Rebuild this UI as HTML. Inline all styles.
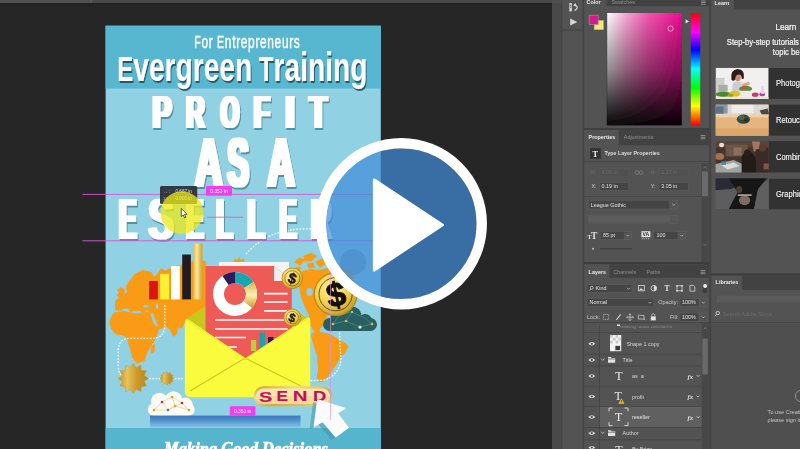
<!DOCTYPE html>
<html>
<head>
<meta charset="utf-8">
<title>Profit as a Reseller - Video</title>
<style>
html,body{margin:0;padding:0;background:#282828;overflow:hidden;}
body{width:800px;height:449px;position:relative;font-family:"Liberation Sans",sans-serif;}
svg{position:absolute;left:0;top:0;display:block;}
text{font-family:"Liberation Sans",sans-serif;}
.ser{font-family:"Liberation Serif",serif;}
</style>
</head>
<body>
<svg width="800" height="449" viewBox="0 0 800 449">
<defs>
  <linearGradient id="gold" x1="0" y1="0" x2="1" y2="0">
    <stop offset="0" stop-color="#d9a93a"/><stop offset="0.35" stop-color="#f8e48e"/><stop offset="0.7" stop-color="#d9ac3c"/><stop offset="1" stop-color="#b98a1e"/>
  </linearGradient>
  <linearGradient id="goldv" x1="0" y1="0" x2="0" y2="1">
    <stop offset="0" stop-color="#d9b24a"/><stop offset="0.5" stop-color="#fdf0b0"/><stop offset="1" stop-color="#c79a30"/>
  </linearGradient>
  <radialGradient id="coin" cx="0.4" cy="0.35" r="0.7">
    <stop offset="0" stop-color="#fdf0a0"/><stop offset="0.55" stop-color="#f3d24a"/><stop offset="1" stop-color="#c79a24"/>
  </radialGradient>
  <linearGradient id="sv" x1="0" y1="0" x2="0" y2="1">
    <stop offset="0" stop-color="#ffffff"/><stop offset="1" stop-color="#000000"/>
  </linearGradient>
  <linearGradient id="hue" x1="0" y1="0" x2="0" y2="1">
    <stop offset="0" stop-color="#ff0000"/><stop offset="0.17" stop-color="#ff00ff"/><stop offset="0.33" stop-color="#0000ff"/><stop offset="0.5" stop-color="#00ffff"/><stop offset="0.67" stop-color="#00ff00"/><stop offset="0.83" stop-color="#ffff00"/><stop offset="1" stop-color="#ff0000"/>
  </linearGradient>
  <clipPath id="posterclip"><rect x="105.6" y="25.7" width="275.2" height="440"/></clipPath>
  <filter id="fatP" filterUnits="userSpaceOnUse" x="100" y="80" width="300" height="180">
    <feMorphology in="SourceGraphic" operator="dilate" radius="2.0 0.4" result="fat"/>
    <feOffset in="fat" dx="1.3" dy="1.8" result="off"/>
    <feGaussianBlur in="off" stdDeviation="0.6" result="blur"/>
    <feFlood flood-color="#2f6678" flood-opacity="0.6"/>
    <feComposite in2="blur" operator="in" result="shadow"/>
    <feMerge><feMergeNode in="shadow"/><feMergeNode in="fat"/></feMerge>
  </filter>
  <filter id="fatA" filterUnits="userSpaceOnUse" x="100" y="80" width="300" height="180">
    <feMorphology in="SourceGraphic" operator="dilate" radius="2.4 0.5" result="fat"/>
    <feOffset in="fat" dx="1.3" dy="1.8" result="off"/>
    <feGaussianBlur in="off" stdDeviation="0.6" result="blur"/>
    <feFlood flood-color="#2f6678" flood-opacity="0.6"/>
    <feComposite in2="blur" operator="in" result="shadow"/>
    <feMerge><feMergeNode in="shadow"/><feMergeNode in="fat"/></feMerge>
  </filter>
  <filter id="fat2" filterUnits="userSpaceOnUse" x="100" y="40" width="300" height="60">
    <feOffset in="SourceGraphic" dx="1.3" dy="1.8" result="off"/>
    <feGaussianBlur in="off" stdDeviation="0.45" result="blur"/>
    <feFlood flood-color="#1a4352" flood-opacity="0.8"/>
    <feComposite in2="blur" operator="in" result="shadow"/>
    <feMerge><feMergeNode in="shadow"/><feMergeNode in="SourceGraphic"/></feMerge>
  </filter>
  <linearGradient id="base" x1="0" y1="0" x2="0" y2="1">
    <stop offset="0" stop-color="#3a74ba"/><stop offset="0.45" stop-color="#5596d0"/><stop offset="1" stop-color="#8cc2e4"/>
  </linearGradient>
  <linearGradient id="svw" x1="0" y1="0" x2="1" y2="0">
    <stop offset="0" stop-color="#ffffff"/><stop offset="0.25" stop-color="#f7a6d4"/><stop offset="0.55" stop-color="#f255b0"/><stop offset="1" stop-color="#ee0c94"/>
  </linearGradient>
  <linearGradient id="svb" x1="0" y1="0" x2="0" y2="1">
    <stop offset="0" stop-color="#000000" stop-opacity="0"/><stop offset="0.5" stop-color="#000000" stop-opacity="0.42"/><stop offset="0.8" stop-color="#000000" stop-opacity="0.76"/><stop offset="1" stop-color="#000000" stop-opacity="0.97"/>
  </linearGradient>
  <filter id="soft" x="-10%" y="-10%" width="120%" height="120%"><feGaussianBlur stdDeviation="0.7"/></filter>
  <linearGradient id="goldb" x1="0" y1="0" x2="1" y2="1">
    <stop offset="0" stop-color="#c9962a"/><stop offset="0.3" stop-color="#f4dc86"/><stop offset="0.6" stop-color="#d8a838"/><stop offset="1" stop-color="#f2d878"/>
  </linearGradient>
  <linearGradient id="goldstar" x1="0" y1="0" x2="1" y2="0">
    <stop offset="0" stop-color="#c08f24"/><stop offset="0.3" stop-color="#e6c25a"/><stop offset="0.6" stop-color="#cc9c2e"/><stop offset="1" stop-color="#b5841a"/>
  </linearGradient>
  <linearGradient id="goldbar" x1="0" y1="0" x2="1" y2="0">
    <stop offset="0" stop-color="#e2ba52"/><stop offset="0.4" stop-color="#fbea96"/><stop offset="0.75" stop-color="#e0b850"/><stop offset="1" stop-color="#cfa238"/>
  </linearGradient>

  <filter id="softall" filterUnits="userSpaceOnUse" x="-5" y="-5" width="810" height="459"><feGaussianBlur stdDeviation="0.45"/></filter>
</defs>

<g id="all" filter="url(#softall)">
<!-- canvas -->
<rect x="-10" y="-10" width="820" height="470" fill="#272727"/>
<!-- top tab bar -->
<rect x="-10" y="-6" width="563" height="9.3" fill="#484848"/>
<rect x="-10" y="-6" width="102" height="9.3" fill="#4f4f4f"/>
<rect x="90.4" y="-6" width="1.4" height="9" fill="#5c5c5c"/>
<rect x="-10" y="3.3" width="563" height="1" fill="#202020"/>

<!-- POSTER -->
<g id="poster" clip-path="url(#posterclip)">
  <rect x="104.6" y="24.7" width="277.2" height="440" fill="#1c1c1c"/>
  <rect x="105" y="25" width="277" height="440" fill="#90d2e4"/>
  <rect x="105" y="25" width="277" height="63.6" fill="#59b7d0"/>
  <rect x="105" y="428" width="277" height="36" fill="#54b5cc"/>
    <g id="illustration">
    <!-- dotted route lines -->
    <g fill="none" stroke="#ffffff" stroke-width="1.3" stroke-dasharray="1.7 1.5" opacity="0.95">
      <path d="M246 254 C 262 236, 282 228, 312 229"/>
      <path d="M146 378.7 L184 378.7"/>
    </g>
    <!-- world map (orange) -->
    <g fill="#fa9b18" stroke="#fa9b18" stroke-width="1.2" stroke-linejoin="round">
      <!-- europe + asia -->
      <path d="M115.5 306 L116 300.5 L120 298.5 L117.5 295 L120 293 L117.5 290 L121 288 L124 289.5 L124 295 L127.5 292.5 L126.5 286 L130 281 L135 274.5 L143 270.5 L151 272.5 L154 278 L158 274 L161 269 L166 271 L172 268 L181 265.5 L192 262 L205.5 261.5 L205.5 309 L184.5 322.5 L181 328 L178 327 L176 334 L173.5 336 L170 329 L166 325.5 L162 328 L158.5 328.5 L155 320 L151.5 312.5 L147 309.5 L143 312 L137 310 L131 311.5 L127 308 L121 310 L116 310 Z"/>
      <!-- africa -->
      <path d="M110 322 L112 316 L115 312.8 L124 311.5 L134 313.5 L142 313 L149.5 312 L152.5 323 L158.5 329.5 L155.5 338 L147 352 L144 360.5 L137 363 L133 358 L131 350 L129.5 345.5 L127 337.5 L122 334.5 L116.5 334 L111.5 328.5 Z"/>
      <path d="M152 347 L154.5 345 L154 351 L151.5 353 Z"/>
      <!-- north america -->
      <path d="M299.5 286 L299 277 L302.5 271.5 L311 269.5 L318 270.5 L325 269 L340 267 L352 271 L354 284 L348 298 L338 306 L331 310 L326 317 L322.5 325 L319 329.5 L314 328 L311 321.5 L309 314 L305 306 L301.5 297 Z"/>
      <path d="M295 262 L300 258 L304 260 L300 265 Z M304 256 L311 253.5 L316 256 L311 261 L305 261 Z M316 262 L322 259 L326 263 L320 267 Z M308 264 L313 263 L314 267.5 L309 268 Z M296 268 L300 267 L300 271 L296 271.5 Z"/>
      <!-- south america -->
      <path d="M311.6 334.5 L316 332 L323 333 L331 335 L338 339.5 L345 343.5 L348 347 L345 352 L340 357.5 L336 364 L332 370 L327 377 L322 381.5 L318 381 L317.5 376 L318.7 370 L318 362 L317.5 355 L315 348 L313 341 Z"/>
      <path d="M309 320 L312 321 L315 326 L319.5 331.5 L316 332.5 L312.5 328 Z"/>
    </g>
    <g fill="#90d2e4">
      <ellipse cx="126" cy="309.6" rx="3.2" ry="1"/>
      <ellipse cx="136.5" cy="312.2" rx="4.5" ry="1.1"/>
      <ellipse cx="146" cy="306.4" rx="3" ry="1.1"/>
      <ellipse cx="157" cy="306" rx="1.2" ry="3"/>
      <ellipse cx="309.5" cy="292" rx="3.2" ry="4"/>
      <path d="M151.5 314 L153 313 L158 326 L156.5 326.5 Z"/>
    </g>
    <path d="M339.6 332.5 L340 347 C341 358,342 362,338.3 369 C334 376,328 380,321 380.3 L310 380.6" fill="none" stroke="#ffffff" stroke-width="1.3" stroke-dasharray="1.7 1.5" opacity="0.95"/>
    <path d="M164.8 305 L164.8 324 C164.8 335,160 338.3,151 338.3 L132 338.3 C122 338.3,118.3 342,118.3 351 L118.3 366 C118.3 372,120 375,124 377" fill="none" stroke="#ffffff" stroke-width="1.3" stroke-dasharray="1.7 1.5" opacity="0.95"/>
    <!-- grey globe/medal behind circle -->
    <circle cx="353" cy="262" r="13" fill="#6f9bb0" opacity="0.8"/>
    <!-- dark teal cloud -->
    <g fill="#2b5f61">
      <rect x="323" y="318" width="54" height="13" rx="6.5"/>
      <circle cx="338" cy="319" r="8"/><circle cx="352" cy="316" r="9.5"/><circle cx="365" cy="321" r="7"/>
    </g>
    <g fill="#f5c93a"><circle cx="333" cy="324" r="1.3"/><circle cx="346" cy="321" r="1.3"/><circle cx="372" cy="324" r="1.3"/><circle cx="352" cy="312" r="1.2"/></g>
    <circle cx="360" cy="327" r="1.6" fill="#ffffff"/>
    <g stroke="#5fa39a" stroke-width="0.5" fill="none"><path d="M333 324 L346 321 L360 327 L372 324 M346 321 L352 312 L365 318 L372 324 M333 324 L340 314 L352 312"/></g>

    <!-- bar chart -->
    <rect x="149.1" y="281" width="8.8" height="18.4" fill="#d8150f"/>
    <rect x="160.1" y="273.8" width="9" height="25.6" fill="#fbf035"/>
    <rect x="171" y="266" width="8.8" height="33.4" fill="#ffffff"/>
    <rect x="182.2" y="254.5" width="8.7" height="44.9" fill="#231f20"/>
    <rect x="193.3" y="243.6" width="9.2" height="55.8" fill="url(#goldbar)"/>

    <!-- envelope back flap -->
    <path d="M184.5 320 L206 306 L206 340 Z" fill="#c8c81e"/>
    <path d="M310 320 L291 307 L291 340 Z" fill="#c8c81e"/>
    <!-- white page behind doc -->
    <rect x="219" y="262" width="70" height="40" fill="#f4f4f4"/>
    <path d="M233.4 262 l1.5 -4 l2 2.5 l2.2 -3.7 l2.2 3.7 l2 -2.5 l1.5 4 Z" fill="#d9a62a"/>
    <!-- red document -->
    <path d="M205.5 266 L274 266 L291.8 281 L291.8 365 L205.5 365 Z" fill="#ee5a57"/>
    <path d="M274 266 L274 281 L291.8 281 Z" fill="#f6ecea"/>
    <!-- donut -->
    <g transform="translate(235,294)">
      <circle r="16.5" fill="none" stroke="#ffffff" stroke-width="11"/>
      <path d="M-12.6 -18 A22 22 0 0 1 0 -22 L0 -11 A11 11 0 0 0 -6.3 -9 Z" fill="#2b1a5c"/>
      <path d="M0 -22 A22 22 0 0 1 18.5 -12 L9.2 -6 A11 11 0 0 0 0 -11 Z" fill="#17a7b3"/>
      <path d="M18.5 -12 A22 22 0 0 1 17 14 L8.5 7 A11 11 0 0 0 9.2 -6 Z" fill="url(#goldv)"/>
    </g>
    <!-- doc lines -->
    <g stroke="#ffffff" stroke-width="1.7">
      <path d="M264 293.6 H287.6 M264 302 H287.6 M264 310.8 H287.6 M215 320 H287.6 M215 329 H287.6 M215 337.5 H246 M215 347 H237"/>
    </g>
    <!-- mini bars -->
    <rect x="251" y="340" width="5.2" height="11" fill="#b9cf3a"/>
    <rect x="259.5" y="332.6" width="5.5" height="18.4" fill="#1d9fb0"/>
    <rect x="268" y="337" width="5.5" height="14" fill="#2b1a5c"/>
    <!-- envelope front -->
    <path d="M184.8 322 Q184.8 318 188.5 319.6 L245.5 358.2 L306.5 318 Q310.3 316.4 310.3 320 L310.3 391 Q310.3 397.2 304 397.2 L191 397.2 Q184.8 397.2 184.8 391 Z" fill="#fbfb3c"/>
    <path d="M190 391 L241 360.5 Q245.5 357 250 360.5 L306 388.5" fill="none" stroke="#c6c824" stroke-width="1.1"/>
    <path d="M187 320 L245.5 358.5 L308 318.5" fill="none" stroke="#e2e22a" stroke-width="0.8"/>

    <!-- coins -->
    <g font-weight="bold" text-anchor="middle" fill="#17100f">
      <circle cx="292.3" cy="278.3" r="10.3" fill="url(#coin)" stroke="#b88a1c" stroke-width="0.9"/>
      <circle cx="292.3" cy="278.3" r="7.6" fill="none" stroke="#2a2016" stroke-width="0.6" opacity="0.75"/>
      <text x="292.3" y="283.4" font-size="14.5" stroke="#17100f" stroke-width="0.4" transform="rotate(17 292.3 278.3)">$</text>
      <circle cx="292.3" cy="317.6" r="8.5" fill="url(#coin)" stroke="#b88a1c" stroke-width="0.9"/>
      <circle cx="292.3" cy="317.6" r="6.2" fill="none" stroke="#2a2016" stroke-width="0.5" opacity="0.75"/>
      <text x="292.3" y="321.9" font-size="12" stroke="#17100f" stroke-width="0.3" transform="rotate(17 292.3 317.6)">$</text>
      <circle cx="335.6" cy="294.2" r="21.3" fill="url(#coin)" stroke="#b88a1c" stroke-width="1.2"/>
      <circle cx="335.6" cy="294.2" r="16.6" fill="none" stroke="#2a2016" stroke-width="0.9" opacity="0.8"/>
      <text x="336" y="306.4" font-size="34" stroke="#17100f" stroke-width="1" transform="rotate(-12 335.6 294.2)">$</text>
    </g>

    <!-- starbursts -->
    <g fill="url(#goldstar)" stroke="#c9982c" stroke-width="0.5" stroke-linejoin="round">
      <path d="M133.3 363.2 L136.2 367.5 L140.9 365.2 L141.3 370.4 L146.5 370.8 L144.2 375.5 L148.5 378.4 L144.2 381.3 L146.5 386.0 L141.3 386.4 L140.9 391.6 L136.2 389.3 L133.3 393.6 L130.4 389.3 L125.7 391.6 L125.3 386.4 L120.1 386.0 L122.4 381.3 L118.1 378.4 L122.4 375.5 L120.1 370.8 L125.3 370.4 L125.7 365.2 L130.4 367.5 Z"/>
      <path d="M166.9 371.5 L168.2 373.4 L170.3 372.4 L170.6 374.7 L172.9 374.9 L171.9 377.1 L173.8 378.4 L171.9 379.7 L172.9 381.8 L170.6 382.1 L170.3 384.4 L168.2 383.4 L166.9 385.3 L165.6 383.4 L163.5 384.4 L163.2 382.1 L160.9 381.8 L161.9 379.7 L160.0 378.4 L161.9 377.1 L160.9 374.9 L163.2 374.7 L163.4 372.4 L165.6 373.4 Z"/>
    </g>

    <!-- white cloud with network -->
    <g fill="#fdfbf4">
      <rect x="147.8" y="403.4" width="46.9" height="12.4" rx="6.2"/>
      <circle cx="159.6" cy="401.4" r="8.6"/><circle cx="173.6" cy="399.8" r="8.6"/><circle cx="185.4" cy="405" r="7.4"/>
    </g>
    <g stroke="#d9b86a" stroke-width="0.5" fill="none"><path d="M154 410 L162 402 L172 397 L182 403 L189 410 M162 402 L168 410 L182 403 M172 397 L175 406 L168 410 M154 410 L168 410 M175 406 L189 410"/></g>
    <g><circle cx="154" cy="410" r="1.3" fill="#e8a020"/><circle cx="162" cy="402" r="1.3" fill="#c0392b"/><circle cx="172" cy="397" r="1.3" fill="#e8a020"/><circle cx="182" cy="403" r="1.3" fill="#c0392b"/><circle cx="189" cy="410" r="1.3" fill="#e8a020"/><circle cx="168" cy="410" r="1.3" fill="#2a8fa0"/><circle cx="175" cy="406" r="1.3" fill="#e8a020"/></g>

    <!-- monitor base -->
    <rect x="150" y="415.6" width="150.5" height="12" fill="url(#base)"/>

    <!-- SEND button -->
    <rect x="253.6" y="386.2" width="78.8" height="20" rx="10" fill="url(#goldb)"/>
    <rect x="256" y="388.6" width="74" height="15.2" rx="7.6" fill="#f8e6ae"/>
    <rect x="256" y="396" width="74" height="7.8" rx="3.9" fill="#f0d48a" opacity="0.6"/>
    <g font-weight="bold" fill="#c8105e" stroke="#c8105e" stroke-width="1.1" stroke-linejoin="round"><text transform="matrix(0.2003 0 0 0.1540 259.07 401.80)" font-size="100">S</text>
      <text transform="matrix(0.1729 0 0 0.1439 276.59 401.45)" font-size="100">E</text>
      <text transform="matrix(0.2041 0 0 0.1439 292.78 401.45)" font-size="100">N</text>
      <text transform="matrix(0.1843 0 0 0.1439 312.92 401.45)" font-size="100">D</text></g>

    <!-- cursor arrow -->
    <g stroke-linejoin="round">
      <path d="M317.8 400 L344.7 408.3 L337.1 413.1 L348.1 427.6 L335.7 436.6 L322.6 421.4 L314.3 426.2 Z" fill="#3f93aa" stroke="#3f93aa" stroke-width="1" opacity="0.55" transform="translate(-4.2,2.6)"/>
      <path d="M317.8 400 L344.7 408.3 L337.1 413.1 L348.1 427.6 L335.7 436.6 L322.6 421.4 L314.3 426.2 Z" fill="#fbfbfb" stroke="#fbfbfb" stroke-width="1.4"/>
    </g>
  </g>

    <g id="postertext" font-weight="bold" fill="#ffffff">
    <text transform="translate(194.3,48.1) scale(0.62,1)" font-size="17.2" font-weight="normal" stroke="#fff" stroke-width="0.5" textLength="170.2" lengthAdjust="spacing">F<tspan font-size="19.2">or</tspan> E<tspan font-size="19.2">ntrepreneurs</tspan></text>
    <g filter="url(#fat2)"><text transform="translate(117.2,80.9) scale(0.678,1)" font-size="35.6">E<tspan font-size="41.5">vergreen</tspan> T<tspan font-size="41.5">raining</tspan></text></g>
    <g filter="url(#fatP)">
      <text transform="matrix(0.2863 0 0 0.4637 152.39 128.10)" font-size="100">P</text>
      <text transform="matrix(0.2552 0 0 0.4637 186.29 128.10)" font-size="100">R</text>
      <text transform="matrix(0.2360 0 0 0.4647 220.63 128.15)" font-size="100">O</text>
      <text transform="matrix(0.2641 0 0 0.4637 253.83 128.10)" font-size="100">F</text>
      <text transform="matrix(0.3610 0 0 0.4637 284.99 128.10)" font-size="100">I</text>
      <text transform="matrix(0.2853 0 0 0.4637 309.48 128.10)" font-size="100">T</text>
    </g>
    <g filter="url(#fatA)">
      <text transform="matrix(0.3756 0 0 0.6832 195.21 186.30)" font-size="100">A</text>
      <text transform="matrix(0.3205 0 0 0.6780 227.48 186.14)" font-size="100">S</text>
      <text transform="matrix(0.3756 0 0 0.6832 267.46 186.30)" font-size="100">A</text>
    </g>
    <g filter="url(#fatP)">
      <text transform="matrix(0.2914 0 0 0.5785 80.05 238.70)" font-size="100">R</text>
      <text transform="matrix(0.2629 0 0 0.5785 118.99 238.70)" font-size="100">E</text>
      <text transform="matrix(0.3756 0 0 0.5763 148.42 238.64)" font-size="100">S</text>
      <text transform="matrix(0.2585 0 0 0.5785 186.27 238.70)" font-size="100">E</text>
      <text transform="matrix(0.2679 0 0 0.5785 216.21 238.70)" font-size="100">L</text>
      <text transform="matrix(0.2825 0 0 0.5785 247.61 238.70)" font-size="100">L</text>
      <text transform="matrix(0.2495 0 0 0.5785 279.83 238.70)" font-size="100">E</text>
      <text transform="matrix(0.2836 0 0 0.5785 311.10 238.70)" font-size="100">R</text>
    </g>
    <text class="ser" x="164" y="455" font-size="18" font-style="italic" font-weight="bold" stroke="#fff" stroke-width="0.7" textLength="164" lengthAdjust="spacingAndGlyphs">Making Good Decisions</text>
  </g>

</g>

<g id="guides">
  <!-- magenta smart guides -->
  <g stroke="#d65ad6" stroke-width="0.9" fill="none">
    <path d="M82.5 194.4 H380"/>
    <path d="M82.5 240.8 H380"/>
    <path d="M207 217.2 H243"/>
  </g>
  <path d="M330.5 272 V420" stroke="#d890e0" stroke-width="0.8" fill="none" opacity="0.8"/>
  <!-- measurement tooltip -->
  <rect x="160" y="186" width="37.2" height="18" rx="1.5" fill="#282c36" opacity="0.92"/>
  <g font-size="4.6" fill="#e4e4dc">
    <text x="163" y="192.8">↔ :</text><text x="175.5" y="192.8">0.667 in</text>
    <text x="163" y="200">↕ :</text><text x="175.5" y="200">0.000 in</text>
  </g>
  <!-- yellow cursor highlight -->
  <circle cx="181.8" cy="212.6" r="21.3" fill="#ece818" opacity="0.76"/>
  <rect x="206" y="186" width="26" height="9.8" rx="1" fill="#f23ef0"/>
  <text x="219" y="192.9" font-size="4.9" fill="#ffffff" text-anchor="middle">0.353 in</text>
  <rect x="229.8" y="406.2" width="25.6" height="9.6" rx="1" fill="#f23ef0"/>
  <text x="242.6" y="413" font-size="4.9" fill="#ffffff" text-anchor="middle">0.353 in</text>
  <!-- mouse pointer -->
  <path d="M181.3 208.4 L181.3 216.6 L183.2 214.9 L184.7 218 L185.9 217.4 L184.5 214.4 L187 214.3 Z" fill="#ffffff" stroke="#222222" stroke-width="0.7" stroke-linejoin="round"/>
</g>

<g id="play">
  <circle cx="401.2" cy="223.8" r="75.4" fill="#418bd8" fill-opacity="0.71"/>
  <circle cx="401.2" cy="223.8" r="80.5" fill="none" stroke="#ffffff" stroke-width="10.5"/>
  <path d="M374.1 179.6 L442.8 225 L374.1 270.4 Z" fill="#ffffff" stroke="#ffffff" stroke-width="2.4" stroke-linejoin="round"/>
</g>

<g id="panels" font-size="5.4">
  <!-- right dock background -->
  <rect x="552" y="-6" width="260" height="466" fill="#484848"/>
  <rect x="552" y="-6" width="260" height="9.4" fill="#4f4f4f"/>
  <!-- icon strip -->
  <rect x="562" y="-6" width="21" height="466" fill="#535353"/>
  <rect x="561.4" y="-6" width="0.8" height="466" fill="#434343"/>
  <rect x="582.6" y="-6" width="1.6" height="466" fill="#434343"/>
  <rect x="562" y="29.6" width="21" height="0.9" fill="#3e3e3e"/>
  <rect x="709.2" y="-6" width="2" height="466" fill="#434343"/>
  <!-- history icon -->
  <g fill="#d6d6d6" stroke="none">
    <rect x="569.3" y="3" width="2.6" height="8.4" rx="0.6"/>
    <rect x="569.9" y="4.8" width="1.4" height="1" fill="#535353"/>
    <rect x="569.9" y="6.6" width="1.4" height="1" fill="#535353"/>
    <path d="M574.2 5.4 C577.8 4.8,578.4 8.6,574.6 10.6" fill="none" stroke="#d6d6d6" stroke-width="1.1"/>
    <path d="M573 5.6 L575.8 3 L576.2 6.6 Z"/>
    <path d="M570.2 18.6 L577.4 22 L570.2 25.5 Z"/>
  </g>

  <!-- COLOR PANEL -->
  <rect x="584.2" y="-6" width="125" height="134.4" fill="#535353"/>
  <rect x="606.6" y="-6" width="102.6" height="12.2" fill="#434343"/>
  <text x="586.6" y="4.3" font-weight="bold" fill="#e6e6e6">Color</text>
  <text x="611.5" y="4.3" fill="#8e8e8e">Swatches</text>
  <g fill="#9a9a9a"><rect x="701" y="0.6" width="4.6" height="0.8"/><rect x="701" y="2.2" width="4.6" height="0.8"/><rect x="701" y="3.8" width="4.6" height="0.8"/></g>
  <!-- swatches -->
  <rect x="594.2" y="20.6" width="9.2" height="9" fill="#f6e970" stroke="#c9c28a" stroke-width="0.5"/>
  <rect x="589.2" y="15.2" width="9" height="9.2" fill="#dc1490" stroke="#9e8e98" stroke-width="0.7"/>
  <!-- colour field -->
  <rect x="607.2" y="13" width="74.2" height="112" fill="url(#svw)"/>
  <rect x="606.8" y="13" width="75" height="112.4" fill="url(#svb)"/>
  <circle cx="670.6" cy="28.6" r="2.6" fill="none" stroke="#f0d0e6" stroke-width="0.7"/>
  <!-- hue slider -->
  <rect x="690.8" y="13" width="9.4" height="112" fill="url(#hue)"/>
  <path d="M685.6 19.2 L689 21.4 L685.6 23.6 Z" fill="#e8e8e8"/>

  <!-- PROPERTIES PANEL -->
  <rect x="584.2" y="128.4" width="125" height="1.4" fill="#3a3a3a"/>
  <rect x="584.2" y="129.8" width="125" height="132.4" fill="#535353"/>
  <rect x="618.8" y="129.8" width="90.4" height="15.4" fill="#434343"/>
  <text x="588.6" y="138.9" font-weight="bold" fill="#ececec">Properties</text>
  <text x="623.8" y="138.9" fill="#8e8e8e">Adjustments</text>
  <g fill="#9a9a9a"><rect x="700.6" y="135.2" width="4.8" height="0.8"/><rect x="700.6" y="136.8" width="4.8" height="0.8"/><rect x="700.6" y="138.4" width="4.8" height="0.8"/></g>
  <rect x="590" y="148.2" width="10.8" height="10.6" fill="#333333"/>
  <text class="ser" x="595.4" y="156.6" font-size="8.4" font-weight="bold" fill="#f2f2f2" text-anchor="middle">T</text>
  <text x="604.5" y="155.4" font-weight="bold" fill="#dedede" font-size="5.3">Type Layer Properties</text>
  <rect x="584.2" y="161.2" width="125" height="0.8" fill="#434343"/>
  <!-- W/H row (dimmed) -->
  <text x="590.6" y="174.4" fill="#6f6f6f">W:</text>
  <rect x="599.4" y="168.6" width="29.4" height="7.8" fill="#515151" stroke="#5a5a5a" stroke-width="0.5"/>
  <text x="601.6" y="174.4" fill="#6a6a6a">4.06 in</text>
  <g fill="none" stroke="#7a7a7a" stroke-width="0.9"><circle cx="637" cy="172.5" r="1.8"/><circle cx="641" cy="172.5" r="1.8"/></g>
  <text x="650.6" y="174.4" fill="#6f6f6f">H:</text>
  <rect x="659" y="168.6" width="29.2" height="7.8" fill="#515151" stroke="#5a5a5a" stroke-width="0.5"/>
  <text x="661.2" y="174.4" fill="#6a6a6a">1.27 in</text>
  <!-- X/Y row -->
  <text x="591.4" y="188.2" fill="#cfcfcf">X:</text>
  <rect x="599.4" y="182.4" width="29.4" height="7.8" fill="#444444" stroke="#626262" stroke-width="0.5"/>
  <text x="601.6" y="188.2" fill="#e2e2e2">0.19 in</text>
  <text x="650.8" y="188.2" fill="#cfcfcf">Y:</text>
  <rect x="659" y="182.4" width="29.2" height="7.8" fill="#444444" stroke="#626262" stroke-width="0.5"/>
  <text x="661.2" y="188.2" fill="#e2e2e2">3.05 in</text>
  <rect x="584.2" y="196" width="117" height="0.7" fill="#434343"/>
  <!-- scrollbar -->
  <rect x="701.6" y="163" width="7" height="99" fill="#474747"/>
  <path d="M703.6 168.2 L705.2 166.6 L706.8 168.2" fill="none" stroke="#8a8a8a" stroke-width="0.7"/>
  <rect x="702" y="171.2" width="6" height="25" rx="1" fill="#6b6b6b"/>
  <path d="M703.6 244 L705.2 245.6 L706.8 244" fill="none" stroke="#8a8a8a" stroke-width="0.7"/>
  <!-- font dropdown -->
  <rect x="588.6" y="200.2" width="89" height="8.8" fill="#454545" stroke="#626262" stroke-width="0.5"/>
  <rect x="669.8" y="200.2" width="7.8" height="8.8" fill="#535353" stroke="#626262" stroke-width="0.5"/>
  <text x="590.8" y="206.5" fill="#e2e2e2">League Gothic</text>
  <path d="M672.2 203.8 L673.8 205.4 L675.4 203.8" fill="none" stroke="#bdbdbd" stroke-width="0.8"/>
  <rect x="588.6" y="215.6" width="89" height="7.6" fill="#5b5b5b" stroke="#606060" stroke-width="0.5"/>
  <rect x="669.8" y="215.6" width="7.8" height="7.6" fill="#585858" stroke="#606060" stroke-width="0.5"/>
  <!-- size row -->
  <text class="ser" x="587.6" y="238.8" font-size="6" font-weight="bold" fill="#e0e0e0">T</text>
  <text class="ser" x="591" y="238.8" font-size="9.4" font-weight="bold" fill="#e0e0e0">T</text>
  <rect x="600.8" y="231.2" width="30.6" height="8.4" fill="#454545" stroke="#626262" stroke-width="0.5"/>
  <rect x="624.2" y="231.2" width="7.2" height="8.4" fill="#535353" stroke="#626262" stroke-width="0.5"/>
  <text x="603" y="237.4" fill="#e2e2e2">85 pt</text>
  <path d="M626.4 234.8 L627.9 236.3 L629.4 234.8" fill="none" stroke="#bdbdbd" stroke-width="0.8"/>
  <rect x="641.4" y="231.2" width="9" height="6" fill="#e0e0e0"/>
  <text x="645.9" y="236.2" font-size="5.2" font-weight="bold" fill="#3a3a3a" text-anchor="middle">VA</text>
  <path d="M641.6 238.8 H650.2" stroke="#d0d0d0" stroke-width="0.8" stroke-dasharray="1.2 0.9"/>
  <rect x="653.8" y="231.2" width="31.4" height="8.4" fill="#454545" stroke="#626262" stroke-width="0.5"/>
  <rect x="678" y="231.2" width="7.2" height="8.4" fill="#535353" stroke="#626262" stroke-width="0.5"/>
  <text x="656.4" y="237.4" fill="#e2e2e2">100</text>
  <path d="M680.2 234.8 L681.7 236.3 L683.2 234.8" fill="none" stroke="#bdbdbd" stroke-width="0.8"/>
  <circle cx="593" cy="248.8" r="1" fill="#bdbdbd"/>
  <rect x="600" y="248.2" width="32" height="1.3" fill="#3c3c3c"/>

  <!-- LAYERS PANEL -->
  <rect x="584.2" y="262.2" width="125" height="2" fill="#3a3a3a"/>
  <rect x="584.2" y="264.2" width="125" height="195.8" fill="#535353"/>
  <rect x="609.4" y="264.2" width="99.8" height="13.6" fill="#434343"/>
  <text x="588.6" y="273.8" font-weight="bold" fill="#ececec">Layers</text>
  <text x="613.4" y="273.8" fill="#8e8e8e">Channels</text>
  <text x="646.4" y="273.8" fill="#8e8e8e">Paths</text>
  <g fill="#9a9a9a"><rect x="700.6" y="270.2" width="4.8" height="0.8"/><rect x="700.6" y="271.8" width="4.8" height="0.8"/><rect x="700.6" y="273.4" width="4.8" height="0.8"/></g>
  <!-- filter row -->
  <rect x="587" y="284.4" width="45" height="8.2" fill="#454545" stroke="#626262" stroke-width="0.5"/>
  <circle cx="591.8" cy="287.8" r="1.5" fill="none" stroke="#d8d8d8" stroke-width="0.7"/><path d="M590.8 289 L589.4 290.6" stroke="#d8d8d8" stroke-width="0.8"/>
  <text x="595.6" y="290.4" fill="#e2e2e2">Kind</text>
  <path d="M627 287.8 L628.5 289.3 L630 287.8" fill="none" stroke="#bdbdbd" stroke-width="0.8"/>
  <g fill="none" stroke="#dadada" stroke-width="0.8">
    <rect x="638.6" y="285.6" width="5.8" height="5.2"/>
    <circle cx="653.8" cy="288.2" r="2.8"/>
    <rect x="677" y="285.8" width="5" height="5"/>
    <path d="M690 285.4 H693.4 L694.8 286.8 V291.2 H690 Z"/>
  </g>
  <path d="M639.4 290 L641 288 L642.2 289.2 L643.6 290 Z" fill="#dadada"/>
  <path d="M653.8 285.4 A2.8 2.8 0 0 1 653.8 291 Z" fill="#dadada"/>
  <text class="ser" x="667" y="291.2" font-size="7.6" font-weight="bold" fill="#e6e6e6" text-anchor="middle">T</text>
  <g fill="#dadada"><rect x="676.2" y="285" width="1.6" height="1.6"/><rect x="681.2" y="285" width="1.6" height="1.6"/><rect x="676.2" y="290" width="1.6" height="1.6"/><rect x="681.2" y="290" width="1.6" height="1.6"/></g>
  <rect x="702.8" y="284" width="4.6" height="9.4" rx="2.3" fill="#3c3c3c"/>
  <circle cx="705.1" cy="286" r="2" fill="#f0f0f0"/>
  <!-- blend row -->
  <rect x="587" y="298.4" width="66.8" height="8.2" fill="#454545" stroke="#626262" stroke-width="0.5"/>
  <text x="589.6" y="304.4" fill="#e2e2e2">Normal</text>
  <path d="M648.4 301.8 L649.9 303.3 L651.4 301.8" fill="none" stroke="#bdbdbd" stroke-width="0.8"/>
  <text x="658.2" y="304.4" fill="#c8c8c8">Opacity:</text>
  <rect x="680" y="298.4" width="19" height="8.2" fill="#454545" stroke="#626262" stroke-width="0.5"/>
  <text x="682" y="304.4" fill="#e6e6e6">100%</text>
  <rect x="699.6" y="298.4" width="7.4" height="8.2" fill="#535353" stroke="#626262" stroke-width="0.5"/>
  <path d="M701.8 301.8 L703.3 303.3 L704.8 301.8" fill="none" stroke="#bdbdbd" stroke-width="0.8"/>
  <!-- lock row -->
  <text x="587" y="319" fill="#c8c8c8">Lock:</text>
  <g fill="none" stroke="#d4d4d4" stroke-width="0.7">
    <rect x="603.6" y="314.4" width="5" height="5" stroke-dasharray="1 0.8"/>
    <path d="M616.4 320 L620.6 314.4" stroke-width="1.1"/>
    <path d="M630 313.8 V320.6 M626.6 317.2 H633.4 M628.8 315 L630 313.8 L631.2 315 M628.8 319.4 L630 320.6 L631.2 319.4 M627.8 316 L626.6 317.2 L627.8 318.4 M632.2 316 L633.4 317.2 L632.2 318.4"/>
    <path d="M639.4 315.4 H644 V320 M638.4 314.4 V319 H645"/>
    <path d="M651.8 316.6 V315.2 A1.5 1.5 0 0 1 654.8 315.2 V316.6"/>
  </g>
  <rect x="650.8" y="316.4" width="5" height="4" fill="#e4e4e4"/>
  <text x="670" y="319" fill="#c8c8c8">Fill:</text>
  <rect x="680" y="313" width="19" height="8.2" fill="#454545" stroke="#626262" stroke-width="0.5"/>
  <text x="682" y="319" fill="#e6e6e6">100%</text>
  <rect x="699.6" y="313" width="7.4" height="8.2" fill="#535353" stroke="#626262" stroke-width="0.5"/>
  <path d="M701.8 316.4 L703.3 317.9 L704.8 316.4" fill="none" stroke="#bdbdbd" stroke-width="0.8"/>
  <rect x="584.2" y="322.4" width="125" height="0.8" fill="#3c3c3c"/>
  <!-- layer rows -->
  <rect x="584.2" y="323.2" width="117.6" height="136.8" fill="#535353"/>
  <rect x="599.4" y="406.5" width="102.4" height="20.5" fill="#606060"/>
  <g fill="#424242">
    <rect x="584.2" y="332.2" width="117.6" height="0.7"/>
    <rect x="584.2" y="353.8" width="117.6" height="0.7"/>
    <rect x="584.2" y="365.6" width="117.6" height="0.7"/>
    <rect x="584.2" y="385.8" width="117.6" height="0.7"/>
    <rect x="584.2" y="406.3" width="117.6" height="0.7"/>
    <rect x="584.2" y="427" width="117.6" height="0.7"/>
    <rect x="584.2" y="439.5" width="117.6" height="0.7"/>
    <rect x="599.2" y="323.2" width="0.7" height="136.8"/>
  </g>
  <text x="620" y="327.6" fill="#8a8a8a" font-size="5" textLength="52" lengthAdjust="spacingAndGlyphs">Making Good Decisions</text>
  <rect x="584.2" y="323.2" width="117.6" height="2.6" fill="#535353"/>
  <rect x="617" y="324.4" width="3" height="1.6" fill="#dcdcdc"/>
  <!-- eyes -->
  <g id="eyes" fill="#e8e8e8">
    <g transform="translate(591.8,343.8)"><path d="M-3.4 0 Q0 -3.4 3.4 0 Q0 3.4 -3.4 0 Z"/><circle r="1.15" fill="#535353"/></g>
    <g transform="translate(591.8,360)"><path d="M-3.4 0 Q0 -3.4 3.4 0 Q0 3.4 -3.4 0 Z"/><circle r="1.15" fill="#535353"/></g>
    <g transform="translate(591.8,376)"><path d="M-3.4 0 Q0 -3.4 3.4 0 Q0 3.4 -3.4 0 Z"/><circle r="1.15" fill="#535353"/></g>
    <g transform="translate(591.8,396.5)"><path d="M-3.4 0 Q0 -3.4 3.4 0 Q0 3.4 -3.4 0 Z"/><circle r="1.15" fill="#535353"/></g>
    <g transform="translate(591.8,417)"><path d="M-3.4 0 Q0 -3.4 3.4 0 Q0 3.4 -3.4 0 Z"/><circle r="1.15" fill="#535353"/></g>
    <g transform="translate(591.8,433.2)"><path d="M-3.4 0 Q0 -3.4 3.4 0 Q0 3.4 -3.4 0 Z"/><circle r="1.15" fill="#535353"/></g>
    <g transform="translate(591.8,447.6)"><path d="M-3.4 0 Q0 -3.4 3.4 0 Q0 3.4 -3.4 0 Z"/><circle r="1.15" fill="#535353"/></g>
  </g>
  <!-- shape 1 copy -->
  <rect x="610" y="335" width="11.2" height="16.2" fill="#f4f4f4"/>
  <g fill="#c9c9c9"><rect x="610" y="335" width="2.8" height="2.8"/><rect x="615.6" y="335" width="2.8" height="2.8"/><rect x="612.8" y="337.8" width="2.8" height="2.8"/><rect x="618.4" y="337.8" width="2.8" height="2.8"/><rect x="610" y="340.6" width="2.8" height="2.8"/><rect x="615.6" y="340.6" width="2.8" height="2.8"/></g>
  <rect x="615" y="345.6" width="5.4" height="5" fill="#3a3a3a" stroke="#f0f0f0" stroke-width="0.7"/>
  <text x="626.4" y="345.8" fill="#d6d6d6">Shape 1 copy</text>
  <!-- Title group -->
  <path d="M601.2 358.6 L602.8 360.4 L604.4 358.6" fill="none" stroke="#c8c8c8" stroke-width="0.8"/>
  <path d="M608 357 H610.8 L611.6 358 H615.2 V362.8 H608 Z" fill="#e2e2e2"/>
  <rect x="608" y="358.6" width="7.2" height="0.7" fill="#535353"/>
  <text x="622.6" y="362" fill="#d6d6d6">Title</text>
  <!-- as a -->
  <text class="ser" x="618.8" y="380.4" font-size="12" fill="#ececec" text-anchor="middle">T</text>
  <text x="632" y="378" fill="#d6d6d6" style="word-spacing:1.6px">as a</text>
  <text class="ser" x="687.4" y="378.6" font-size="6.8" font-style="italic" font-weight="bold" fill="#e2e2e2">fx</text>
  <path d="M696.6 375 L698.1 376.6 L699.6 375" fill="none" stroke="#c8c8c8" stroke-width="0.8"/>
  <!-- profit -->
  <text class="ser" x="618.2" y="400.4" font-size="12" fill="#ececec" text-anchor="middle">T</text>
  <path d="M618.4 403.8 L621.4 398.2 L624.4 403.8 Z" fill="#f2c21c"/>
  <rect x="621.05" y="400" width="0.7" height="2" fill="#3a3a3a"/><rect x="621.05" y="402.5" width="0.7" height="0.7" fill="#3a3a3a"/>
  <text x="632" y="398.6" fill="#d6d6d6">profit</text>
  <text class="ser" x="687.4" y="399" font-size="6.8" font-style="italic" font-weight="bold" fill="#e2e2e2">fx</text>
  <path d="M696.6 395.6 L698.1 397.2 L699.6 395.6" fill="none" stroke="#c8c8c8" stroke-width="0.8"/>
  <!-- reseller (selected) -->
  <path d="M609 411.4 V408 H612.6 M624.4 408 H628 V411.4 M628 422.2 V425.6 H624.4 M612.6 425.6 H609 V422.2" fill="none" stroke="#f0f0f0" stroke-width="0.8"/>
  <text class="ser" x="618.6" y="421.2" font-size="12" fill="#f4f4f4" text-anchor="middle">T</text>
  <text x="632" y="419" fill="#e4e4e4">reseller</text>
  <text class="ser" x="687.4" y="419.6" font-size="6.8" font-style="italic" font-weight="bold" fill="#ececec">fx</text>
  <path d="M696.6 416.2 L698.1 417.8 L699.6 416.2" fill="none" stroke="#d2d2d2" stroke-width="0.8"/>
  <!-- Author group -->
  <path d="M601.2 431.8 L602.8 433.6 L604.4 431.8" fill="none" stroke="#c8c8c8" stroke-width="0.8"/>
  <path d="M608 430.2 H610.8 L611.6 431.2 H615.2 V436 H608 Z" fill="#e2e2e2"/>
  <rect x="608" y="431.8" width="7.2" height="0.7" fill="#535353"/>
  <text x="622.6" y="435.2" fill="#d6d6d6">Author</text>
  <text class="ser" x="618.8" y="453.6" font-size="12" fill="#ececec" text-anchor="middle">T</text>
  <text x="632" y="451" fill="#d6d6d6">By Brian</text>
  <!-- layers scrollbar -->
  <rect x="701.8" y="323.2" width="7.4" height="136.8" fill="#474747"/>
  <path d="M703.8 329.2 L705.3 327.6 L706.8 329.2" fill="none" stroke="#8a8a8a" stroke-width="0.7"/>
  <rect x="702.4" y="338.6" width="5.4" height="36" rx="1" fill="#6b6b6b"/>

  <!-- LEARN PANEL -->
  <rect x="711.2" y="-6" width="100.8" height="279.6" fill="#535353"/>
  <rect x="733.8" y="-6" width="78.2" height="15.4" fill="#434343"/>
  <text x="714.6" y="4.6" font-weight="bold" fill="#ececec">Learn</text>
  <text transform="translate(775.4,30.2) scale(0.93,1)" font-size="8.8" fill="#f4f4f4" stroke="#f4f4f4" stroke-width="0.25" style="word-spacing:4px">Learn Photoshop</text>
  <text transform="translate(726.8,44.9) scale(0.92,1)" font-size="8.3" fill="#f4f4f4" stroke="#f4f4f4" stroke-width="0.2">Step-by-step tutorials directly in the app. Pick a</text>
  <text transform="translate(772.8,55) scale(0.92,1)" font-size="8.3" fill="#f4f4f4" stroke="#f4f4f4" stroke-width="0.2">topic below to begin.</text>
  <!-- tutorial cards -->
  <g>
    <rect x="768.8" y="68" width="43.2" height="30.8" fill="#303030"/>
    <rect x="768.8" y="104.6" width="43.2" height="31" fill="#303030"/>
    <rect x="768.8" y="141.2" width="43.2" height="31.2" fill="#303030"/>
    <rect x="768.8" y="178.8" width="43.2" height="30.4" fill="#303030"/>
    <text transform="translate(776,86.4) scale(0.92,1)" font-size="8.2" fill="#f4f4f4" stroke="#f4f4f4" stroke-width="0.15">Photography</text>
    <text transform="translate(776,123.2) scale(0.92,1)" font-size="8.2" fill="#f4f4f4" stroke="#f4f4f4" stroke-width="0.15">Retouching</text>
    <text transform="translate(776,160) scale(0.92,1)" font-size="8.2" fill="#f4f4f4" stroke="#f4f4f4" stroke-width="0.15">Combining images</text>
    <text transform="translate(776,196.6) scale(0.92,1)" font-size="8.2" fill="#f4f4f4" stroke="#f4f4f4" stroke-width="0.15">Graphic design</text>
  </g>
    <g id="thumbs">
    <!-- thumb 1 : photography -->
    <svg x="715.6" y="67.8" width="53" height="31.2" viewBox="0 0 53 31.2" preserveAspectRatio="none" overflow="hidden">
      <rect width="53" height="31.2" fill="#f1f0ee"/>
      <g filter="url(#soft)">
        <rect x="0" y="10" width="9" height="16" fill="#cfcdc9"/>
        <rect x="3" y="17" width="9" height="7" fill="#a9ada9"/>
        <path d="M15 28 L16.5 16 Q22 11 28 15 L33 14 L34 18 L29 22 L29 28 Z" fill="#dcdde2"/>
        <path d="M17 24 L18 15 Q22 12 25 15 L25 24 Z" fill="#c9ccd4"/>
        <ellipse cx="22.3" cy="9.6" rx="3" ry="3.6" fill="#c58f74"/>
        <path d="M15.8 12 Q14.4 1.8 22 1.2 Q29.6 1.8 28.2 10.4 Q27.2 12 26 10.6 Q26.4 6.6 22.8 6.6 Q19.6 6.8 19.6 12 Q17.6 14 15.8 12 Z" fill="#2a1a17"/>
        <path d="M26 17 L33 13.6 L34.6 16 L28 20 Z" fill="#d6a88e"/>
        <ellipse cx="30" cy="21" rx="6.5" ry="3" fill="#5f8a3a"/>
        <ellipse cx="28.4" cy="19.6" rx="2.2" ry="1.6" fill="#c9562e"/>
        <path d="M24.4 23 H36 L34.6 29 H25.8 Z" fill="#ecebe6"/>
        <ellipse cx="8" cy="26.6" rx="8" ry="2.6" fill="#4f8a2c"/>
        <ellipse cx="19" cy="26" rx="5.6" ry="3" fill="#e6c11e"/>
        <ellipse cx="15" cy="27.6" rx="3" ry="1.8" fill="#8aa82c"/>
        <ellipse cx="39.6" cy="27" rx="3.4" ry="2.4" fill="#c93a78"/>
        <ellipse cx="46.6" cy="26.4" rx="2.8" ry="2" fill="#a84a9c"/>
        <rect x="45.4" y="18" width="3" height="8" fill="#f3cfe0"/>
        <rect x="0" y="29" width="53" height="2.4" fill="#efe6da"/>
      </g>
    </svg>
    <!-- thumb 2 : retouching -->
    <svg x="715.6" y="104.6" width="53" height="31.2" viewBox="0 0 53 31.2" preserveAspectRatio="none" overflow="hidden">
      <rect width="53" height="31.2" fill="#e3b27c"/>
      <g filter="url(#soft)">
        <rect x="-2" y="-2" width="57" height="12.4" fill="#dcd8d3"/>
        <rect x="-2" y="-2" width="14" height="11" fill="#8c97a4"/>
        <rect x="0" y="2" width="8" height="7" fill="#5d6f86"/>
        <rect x="16" y="-2" width="22" height="10.6" fill="#eeebe8"/>
        <path d="M44 6 L52 4 L54 10 L46 10 Z" fill="#4d4640"/>
        <rect x="-2" y="10" width="57" height="3" fill="#f0cfa6"/>
        <rect x="-2" y="13" width="57" height="20" fill="#e6b47e"/>
        <rect x="-2" y="24" width="57" height="9" fill="#dda66c"/>
        <path d="M21 29 L24.4 18.6" stroke="#c9b24e" stroke-width="0.9"/>
        <ellipse cx="27.8" cy="14.6" rx="6.6" ry="4.6" fill="#37473c"/>
        <ellipse cx="26" cy="13" rx="3" ry="2.4" fill="#4f6656"/>
        <ellipse cx="30.6" cy="16" rx="2.6" ry="2" fill="#27332b"/>
      </g>
    </svg>
    <!-- thumb 3 : combining images -->
    <svg x="715.6" y="141.4" width="53" height="31" viewBox="0 0 53 31" preserveAspectRatio="none" overflow="hidden">
      <rect width="53" height="31" fill="#45352d"/>
      <g filter="url(#soft)">
        <rect x="-2" y="-2" width="57" height="8" fill="#5c4335"/>
        <ellipse cx="6" cy="3.6" rx="2.6" ry="2.2" fill="#e2dfd8"/>
        <rect x="10" y="3" width="22" height="12" fill="#6b5546"/>
        <rect x="18" y="6" width="8" height="8" fill="#8c6e5c"/>
        <ellipse cx="4" cy="15" rx="4.6" ry="3.4" fill="#a8704c"/>
        <path d="M-2 23 L18 18.5 L28 23 L26 33 L-2 33 Z" fill="#9fa3a0"/>
        <path d="M6 24 L18 21 L24 24.6 L12 28 Z" fill="#d9dedb"/>
        <rect x="6" y="20" width="4.4" height="3.4" fill="#4e86a2"/>
        <path d="M26 33 L26 16 Q29 8 35 10 L40 16 L41 33 Z" fill="#241a18"/>
        <ellipse cx="31.6" cy="11.6" rx="3.2" ry="3.6" fill="#2b1f1c"/>
        <path d="M36 -2 L44 -2 L45 10 L38 10 Z" fill="#a3745e"/>
        <path d="M40 8 L54 6 L54 33 L41 33 Z" fill="#3a2a25"/>
        <ellipse cx="47" cy="6" rx="3.6" ry="4.2" fill="#5a3d33"/>
        <rect x="48" y="22" width="6" height="6" fill="#7c5848"/>
      </g>
    </svg>
    <!-- thumb 4 : graphic design -->
    <svg x="715.6" y="178.2" width="53" height="30.8" viewBox="0 0 53 30.8" preserveAspectRatio="none" overflow="hidden">
      <rect width="53" height="30.8" fill="#5b5b5b"/>
      <g filter="url(#soft)">
        <rect x="-2" y="-2" width="57" height="6" fill="#3a3a3c"/>
        <path d="M-2 -2 L14 -2 L22 8 L10 13 L-2 12 Z" fill="#2b2c31"/>
        <path d="M-2 12 L14 11 L22 18 L14 33 L-2 33 Z" fill="#5d5d5e"/>
        <path d="M12 -2 L52 -2 L42 12 L38 33 L12 33 L22 14 Z" fill="#121212"/>
        <path d="M43 10 L55 -2 L55 33 L38 33 Z" fill="#5f5f60"/>
        <ellipse cx="29" cy="22" rx="5.6" ry="5" fill="#7d6c63"/>
        <ellipse cx="23.6" cy="11.4" rx="3" ry="3.6" fill="#4a3f3b"/>
        <rect x="22" y="16" width="14" height="1.8" fill="#a79a94"/>
      </g>
    </svg>
  </g>


  <!-- LIBRARIES PANEL -->
  <rect x="711.2" y="273.6" width="100.8" height="2" fill="#3a3a3a"/>
  <rect x="711.2" y="275.6" width="100.8" height="184.4" fill="#535353"/>
  <rect x="742" y="275.6" width="70" height="14.4" fill="#434343"/>
  <text x="715.6" y="284.4" font-weight="bold" fill="#ececec">Libraries</text>
  <rect x="717" y="295.6" width="95" height="7" fill="#5a5a5a"/>
  <circle cx="717.8" cy="313" r="1.7" fill="none" stroke="#e0e0e0" stroke-width="0.8"/><path d="M716.6 314.4 L715 316.2" stroke="#e0e0e0" stroke-width="0.9"/>
  <text x="723" y="315.6" fill="#6c6c6c">Search Adobe Stock</text>
  <rect x="711.2" y="322" width="100.8" height="0.8" fill="#424242"/>
  <rect x="711.2" y="322.8" width="100.8" height="137.2" fill="#4f4f4f"/>
  <circle cx="801" cy="396" r="5.6" fill="none" stroke="#8e8e8e" stroke-width="1"/>
  <text x="767.6" y="413.8" font-size="5.6" fill="#c4c4c4">To use Creative Cloud Libraries,</text>
  <text x="767.6" y="422" font-size="5.6" fill="#c4c4c4">please sign in to Creative Cloud</text>
</g>

</g>
</svg>
</body>
</html>
